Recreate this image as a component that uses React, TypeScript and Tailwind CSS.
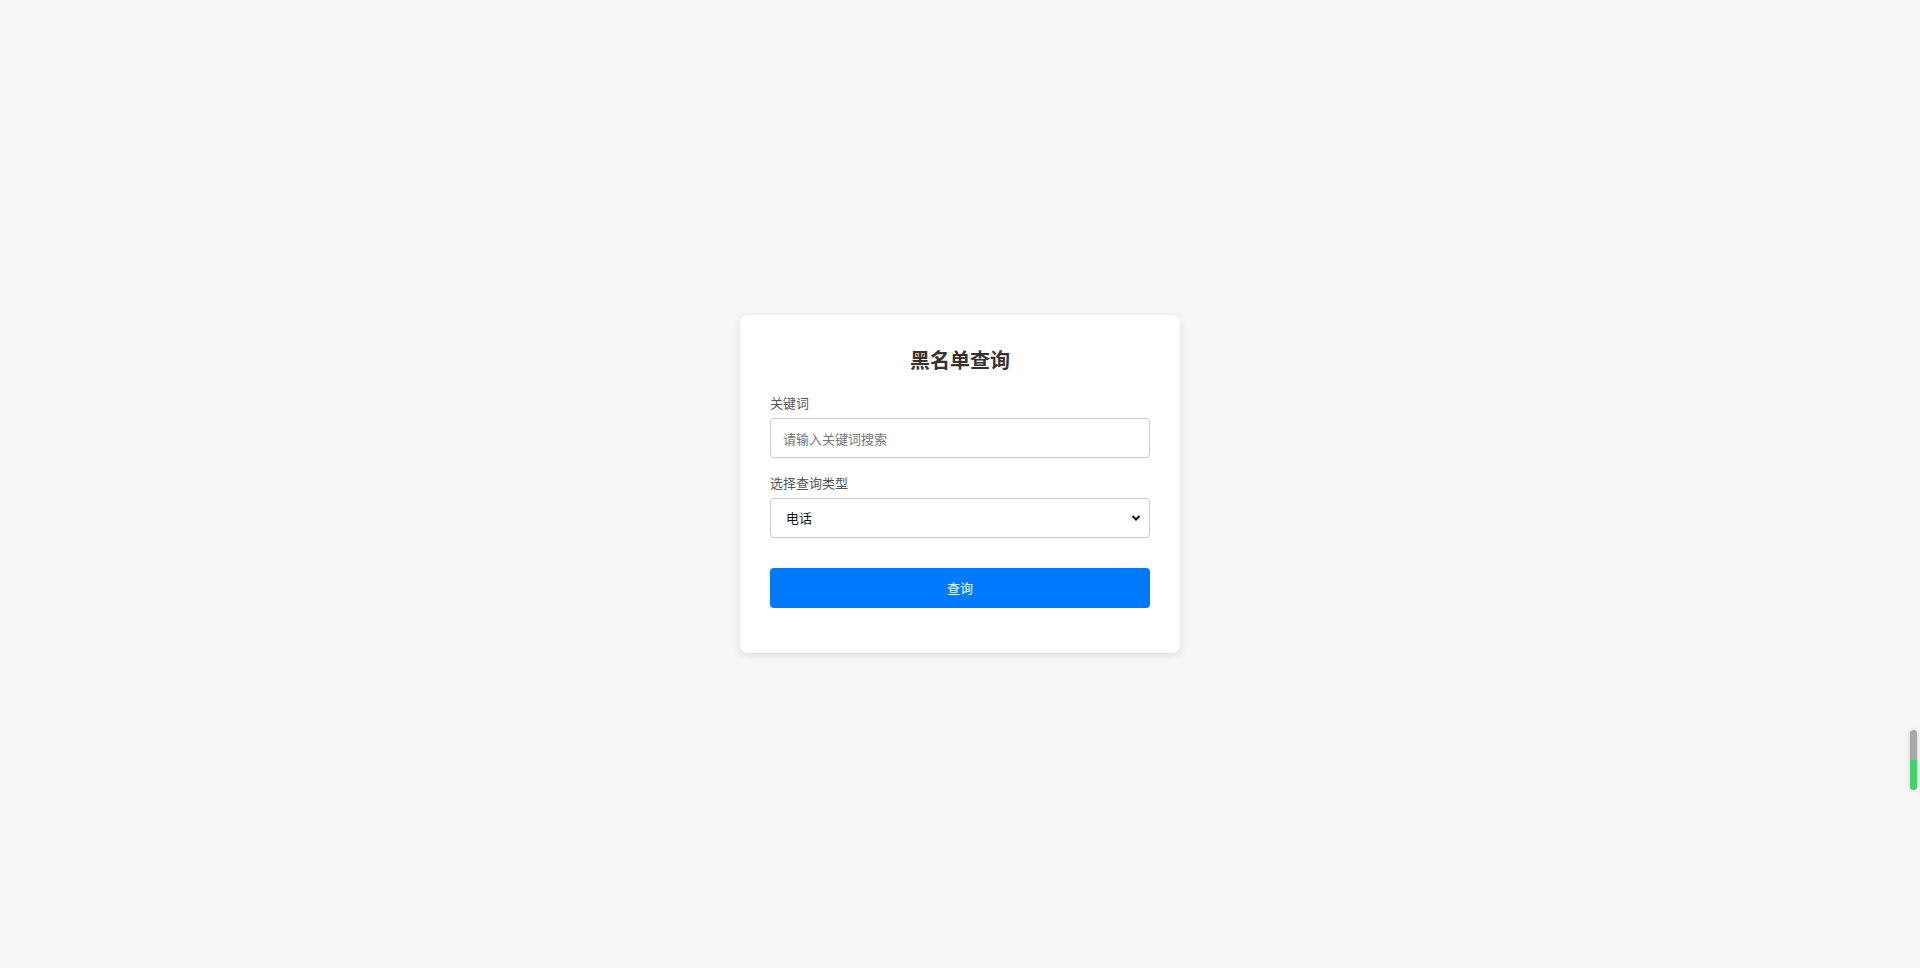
import React from "react";

export default function App() {
  return (
    <div
      className="relative h-[968px] w-full bg-[#f6f6f6] flex items-center justify-center"
      style={{ fontFamily: '"Noto Sans CJK SC", "Noto Sans", sans-serif' }}
    >
      <div className="w-[440px] bg-white rounded-[8px] p-[30px] shadow-[0_2px_8px_rgba(0,0,0,0.1)]">
        <h2 className="text-[20px] leading-[30px] font-bold text-center text-[#333] mb-[18px]">
          黑名单查询
        </h2>
        <div className="mb-[15px]">
          <label className="block text-[13px] leading-[19px] text-[#555] mb-[6px]">关键词</label>
          <input
            type="text"
            placeholder="请输入关键词搜索"
            className="block w-full h-[40px] border border-[#ccc] rounded-[4px] px-[12px] text-[13px] text-[#333] placeholder:text-[#777] outline-none"
          />
        </div>
        <div className="mb-[30px]">
          <label className="block text-[13px] leading-[19px] text-[#555] mb-[6px]">选择查询类型</label>
          <div className="relative">
            <select
              defaultValue="phone"
              className="block w-full h-[40px] border border-[#ccc] rounded-[4px] pl-[15px] pr-[30px] text-[13px] font-normal text-[#111] bg-white appearance-none outline-none"
            >
              <option value="phone">电话</option>
            </select>
            <svg
              className="absolute right-[9px] top-[16px] pointer-events-none"
              width="10"
              height="8"
              viewBox="0 0 10 8"
            >
              <path d="M1.5 2 L5 5.5 L8.5 2" fill="none" stroke="#111" strokeWidth="2" />
            </svg>
          </div>
        </div>
        <button className="block w-full h-[40px] bg-[#007bff] text-white text-[13px] rounded-[4px] mb-[15px]">
          查询
        </button>
      </div>
      <div className="absolute left-[1910px] top-[730px] w-[7px] h-[60px] rounded-full bg-[#a8a8a8] overflow-hidden shadow-[0_0_4px_rgba(0,0,0,0.15)]">
        <div className="absolute bottom-0 left-0 w-full h-[30px] rounded-b-full bg-[#3fd46a]" />
      </div>
    </div>
  );
}
